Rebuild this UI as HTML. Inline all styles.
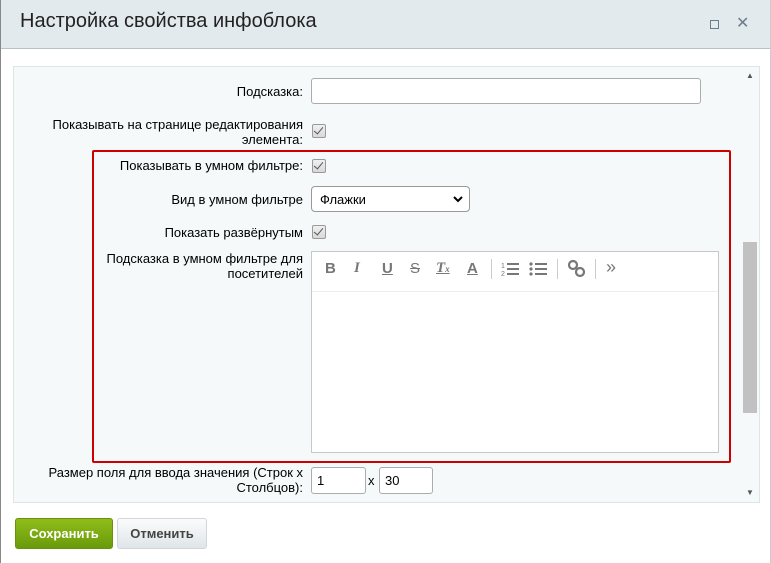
<!DOCTYPE html>
<html><head><meta charset="utf-8"><style>
*{box-sizing:border-box}
body{margin:0;width:771px;height:563px;background:#fff;font-family:"Liberation Sans",Arial,sans-serif;font-size:13px;color:#000;position:relative;overflow:hidden}
.hdr{position:absolute;left:0;top:0;width:771px;height:49px;background:#e3eaed;border-bottom:1px solid #b9c2c6}
.hdr .t{position:absolute;left:20px;top:10px;font-size:20px;color:#222}
.box{position:absolute;left:13px;top:66px;width:747px;height:437px;background:#f5f9f9;border:1px solid #dce6e9}
.lab{position:absolute;right:468px;text-align:right;color:#000;line-height:15px}
.inp{position:absolute;background:#fff;border:1px solid #a8adb0;border-radius:3px}
.cb{position:absolute;width:14px;height:14px;border:1px solid #9a9a9a;border-radius:2px;background:linear-gradient(#f0f0f0,#d8d8d8)}
.cb:after{content:"";position:absolute;left:3px;top:0px;width:4px;height:8px;border:solid #555;border-width:0 1.5px 1.5px 0;transform:rotate(40deg)}
.red{position:absolute;left:92px;top:150px;width:639px;height:313px;border:2px solid #c00;border-radius:2px}
.sb{position:absolute;left:741px;top:67px;width:17px;height:435px}
.tb{position:absolute;top:260px;color:#777;font-size:15px;font-weight:bold}
.btn{position:absolute;top:518px;height:31px;border-radius:3px;font-weight:bold;font-size:13px;text-align:center;line-height:30px}
</style></head><body>
<div style="position:absolute;left:0;top:0;width:1px;height:563px;background:#888;z-index:5"></div>
<div style="position:absolute;right:0;top:0;width:1px;height:563px;background:#ccc;z-index:5"></div>
<div class="hdr"><div class="t">Настройка свойства инфоблока</div>
<div style="position:absolute;left:710px;top:20px;width:9px;height:9px;border:1.5px solid #6b7c8a"></div>
<div style="position:absolute;left:736px;top:13px;font-size:16px;color:#6b7c8a">✕</div></div>
<div class="box"></div>
<div class="sb"><div style="position:absolute;left:5px;top:4px;font-size:8px;color:#555">▲</div>
<div style="position:absolute;left:2px;top:175px;width:14px;height:171px;background:#c1c1c1"></div>
<div style="position:absolute;left:5px;top:421px;font-size:8px;color:#555">▼</div></div>
<div class="lab" style="top:84px">Подсказка:</div>
<div class="inp" style="left:311px;top:78px;width:390px;height:26px"></div>
<div class="lab" style="top:117px">Показывать на странице редактирования<br>элемента:</div>
<div class="cb" style="left:312px;top:124px"></div>
<div class="red"></div>
<div class="lab" style="top:158px">Показывать в умном фильтре:</div>
<div class="cb" style="left:312px;top:159px"></div>
<div class="lab" style="top:192px">Вид в умном фильтре</div>
<div class="inp" style="left:311px;top:186px;width:159px;height:26px;border-color:#999;border-radius:4px;padding:5px 8px">Флажки<svg style="position:absolute;right:6px;top:8px" width="10" height="8" viewBox="0 0 10 8"><path d="M1 2 L5 6 L9 2" stroke="#000" stroke-width="2" fill="none"/></svg></div>
<div class="lab" style="top:225px">Показать развёрнутым</div>
<div class="cb" style="left:312px;top:225px"></div>
<div class="lab" style="top:251px">Подсказка в умном фильтре для<br>посетителей</div>
<div class="inp" style="left:311px;top:251px;width:408px;height:202px;border-radius:0;border-color:#c5c9cc"></div>
<div style="position:absolute;left:312px;top:291px;width:406px;height:1px;background:#eee"></div>
<div class="tb" style="left:325px">B</div>
<div class="tb" style="left:354px;font-style:italic;font-family:'Liberation Serif',serif;color:#777">I</div>
<div class="tb" style="left:382px;text-decoration:underline">U</div>
<div class="tb" style="left:410px;text-decoration:line-through;font-weight:normal">S</div>
<div class="tb" style="left:436px;font-style:italic;font-family:'Liberation Serif',serif;text-decoration:underline;color:#777">T<span style="font-size:9px">x</span></div>
<div class="tb" style="left:467px;text-decoration:underline">A</div>
<div style="position:absolute;left:491px;top:259px;width:1px;height:20px;background:#ccc"></div>
<svg style="position:absolute;left:501px;top:261px" width="19" height="16" viewBox="0 0 19 16"><text x="0" y="7" font-size="7" fill="#777" font-family="Liberation Sans">1</text><text x="0" y="15" font-size="7" fill="#777" font-family="Liberation Sans">2</text><path d="M6 3h12M6 8h12M6 13h12" stroke="#777" stroke-width="2"/></svg>
<svg style="position:absolute;left:529px;top:261px" width="19" height="16" viewBox="0 0 19 16"><circle cx="2" cy="3" r="1.6" fill="#777"/><circle cx="2" cy="8" r="1.6" fill="#777"/><circle cx="2" cy="13" r="1.6" fill="#777"/><path d="M6 3h12M6 8h12M6 13h12" stroke="#777" stroke-width="2"/></svg>
<div style="position:absolute;left:557px;top:259px;width:1px;height:20px;background:#ccc"></div>
<svg style="position:absolute;left:567px;top:259px" width="19" height="19" viewBox="0 0 19 19"><circle cx="6" cy="6" r="4" stroke="#777" stroke-width="2.2" fill="none"/><circle cx="13" cy="13" r="4" stroke="#777" stroke-width="2.2" fill="none"/></svg>
<div style="position:absolute;left:595px;top:259px;width:1px;height:20px;background:#ccc"></div>
<div class="tb" style="left:606px;top:257px;font-size:18px;font-weight:normal">»</div>
<div class="lab" style="top:465px">Размер поля для ввода значения (Строк x<br>Столбцов):</div>
<div class="inp" style="left:311px;top:467px;width:55px;height:27px;padding:5px 5px">1</div>
<div style="position:absolute;left:368px;top:473px">x</div>
<div class="inp" style="left:379px;top:467px;width:54px;height:27px;padding:5px 5px">30</div>
<div class="btn" style="left:15px;width:98px;background:linear-gradient(#8fbd1a,#6a9a0a);color:#fff;border:1px solid #6a900e">Сохранить</div>
<div class="btn" style="left:117px;width:90px;background:linear-gradient(#fbfcfc,#dfe5e8);color:#444;border:1px solid #d0d6d9">Отменить</div>
</body></html>
